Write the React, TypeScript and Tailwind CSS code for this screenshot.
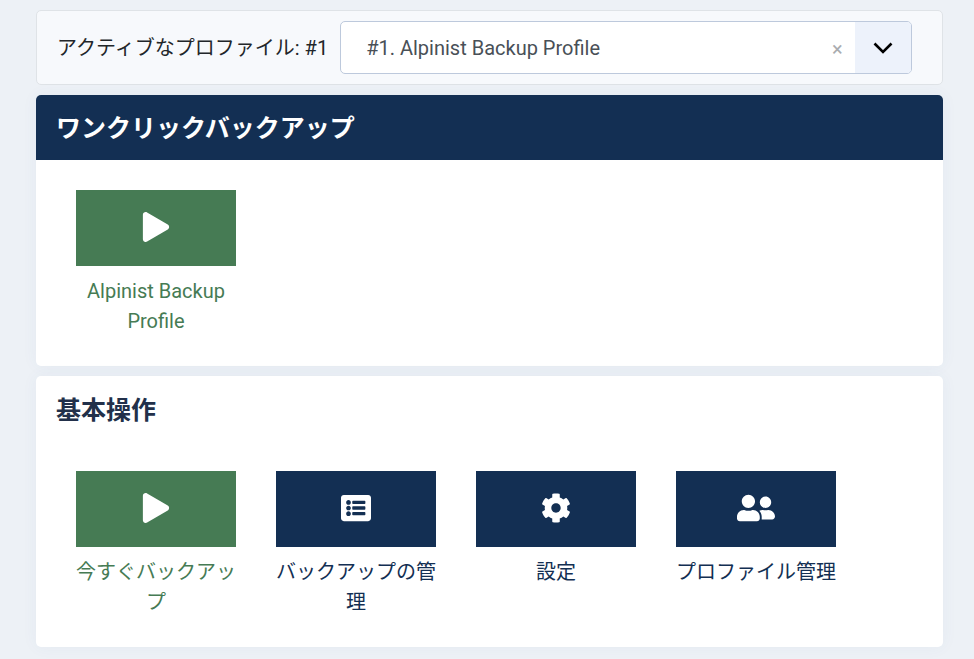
import React from 'react';
import { FaPlay, FaListAlt, FaCog, FaUserFriends } from 'react-icons/fa';
import { IconType } from 'react-icons';

interface TileProps {
  label: string;
  icon: IconType;
  iconSize?: number;
  green?: boolean;
}

const Tile: React.FC<TileProps> = ({ label, icon: Icon, iconSize = 30, green }) => (
  <a className={`block w-[160px] text-center text-[20px] leading-[30px] ${green ? 'text-[#467b54]' : 'text-[#132f53]'}`}>
    <div className={`h-[76px] mb-[10px] pb-[2px] flex items-center justify-center ${green ? 'bg-[#467b54]' : 'bg-[#132f53]'}`}>
      <Icon size={iconSize} color="#ffffff" />
    </div>
    {label}
  </a>
);

export default function App() {
  return (
    <div
      className="min-h-[659px] bg-[#edf1f6] pt-[10px] pl-[36px] pr-[31px] pb-3 text-[20px]"
      style={{ fontFamily: 'Roboto, "Noto Sans CJK JP", sans-serif' }}
    >
      {/* Profile selector */}
      <div className="h-[75px] flex items-center pl-5 pr-[30px] gap-[12px] bg-[#f7f9fc] border border-[#dfe3e7] rounded-[5px] text-[#22262a]">
        <span className="whitespace-nowrap">アクティブなプロファイル: #1</span>
        <div className="flex-1 h-[53px] flex bg-white border border-[#bdc9dc] rounded-[5px] overflow-hidden">
          <div className="flex-1 flex items-center pl-[25px] text-[#495057]">#1. Alpinist Backup Profile</div>
          <div className="w-[23px] flex items-center text-[#a9acb0] text-[20px] pt-[2px]">×</div>
          <div className="w-[56px] bg-[#edf2fb] flex items-center justify-center">
            <svg width="20" height="12" viewBox="0 0 20 12" fill="none" stroke="#000000" strokeWidth="2.6">
              <path d="M1.5 1.5 L10 10 L18.5 1.5" />
            </svg>
          </div>
        </div>
      </div>

      {/* One click backup */}
      <div className="mt-[10px] bg-white rounded-[5px] shadow-[0_0_16px_rgba(60,90,150,0.05)] overflow-hidden h-[271px]">
        <h2 className="h-[65px] bg-[#132f53] text-white font-bold text-[25px] flex items-center px-5 pt-[2px]">ワンクリックバックアップ</h2>
        <div className="pt-[30px] pl-10">
          <Tile label="Alpinist Backup Profile" icon={FaPlay} green />
        </div>
      </div>

      {/* Basic operations */}
      <div className="mt-[10px] bg-white rounded-[5px] shadow-[0_0_16px_rgba(60,90,150,0.05)] h-[271px]">
        <h3 className="pt-[18px] px-5 text-[25px] leading-[33px] font-bold text-[#22304a]">基本操作</h3>
        <div className="mt-[44px] pl-10 flex gap-10">
          <Tile label="今すぐバックアップ" icon={FaPlay} green />
          <Tile label="バックアップの管理" icon={FaListAlt} />
          <Tile label="設定" icon={FaCog} />
          <Tile label="プロファイル管理" icon={FaUserFriends} iconSize={38} />
        </div>
      </div>
    </div>
  );
}
